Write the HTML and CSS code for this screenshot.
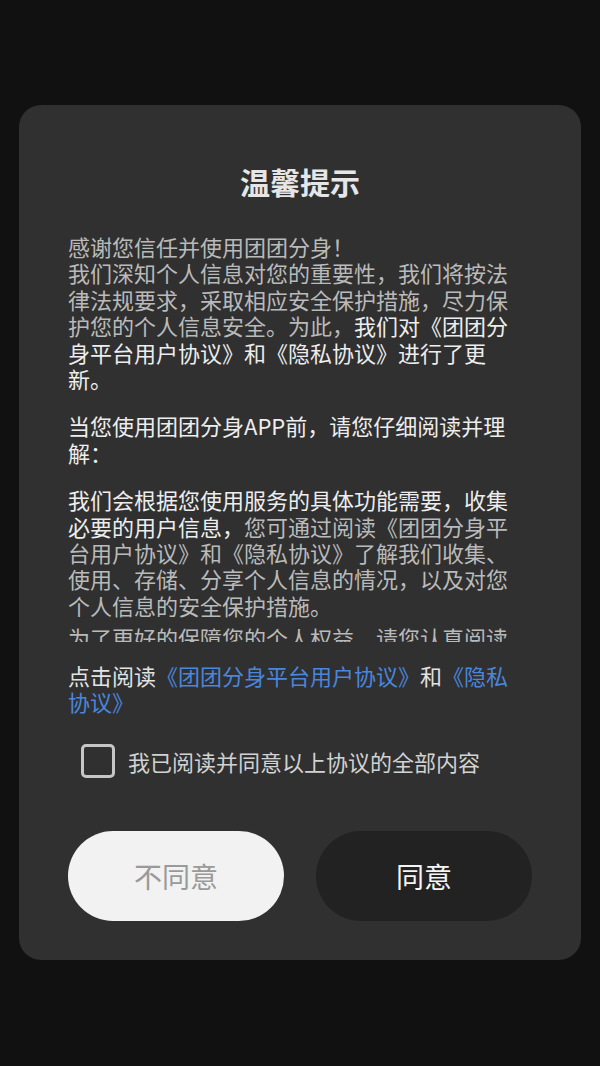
FILE: index.html
```html
<!DOCTYPE html>
<html lang="zh-CN">
<head>
    <meta charset="UTF-8">
    <meta name="viewport" content="width=device-width, initial-scale=1.0">
    <title>温馨提示</title>
    <link rel="stylesheet" href="styles.css">
</head>
<body>
    <div class="page">
        <div class="dialog">
            <h2 class="dialog-title">温馨提示</h2>

            <div class="notice">
                <p>感谢您信任并使用团团分身！<br>我们深知个人信息对您的重要性，我们将按法律法规要求，采取相应安全保护措施，尽力保护您的个人信息安全。为此，<span class="em">我们对《团团分身平台用户协议》和《隐私协议》进行了更新。</span></p>
                <p class="em">当您使用团团分身APP前，请您仔细阅读并理解：</p>
                <p><span class="em">我们会根据您使用服务的具体功能需要，收集必要的用户信息，</span>您可通过阅读《团团分身平台用户协议》和《隐私协议》了解我们收集、使用、存储、分享个人信息的情况，以及对您个人信息的安全保护措施。</p>
                <p class="tight">为了更好的保障您的个人权益，请您认真阅读以上协议的全部内容，如您同意，请点击“同意”开始使用我们的服务。</p>
            </div>

            <p class="links">点击阅读<a href="#">《团团分身平台用户协议》</a>和<a href="#">《隐私协议》</a></p>

            <label class="agree">
                <input type="checkbox" id="agree">
                <span class="box"></span>
                <span>我已阅读并同意以上协议的全部内容</span>
            </label>

            <div class="actions">
                <button type="button" class="btn btn-reject">不同意</button>
                <button type="button" class="btn btn-accept">同意</button>
            </div>
        </div>
    </div>
</body>
</html>
```

FILE: styles.css
```css
body {
    margin: 0;
    background: #111111;
    font-family: "Noto Sans CJK SC", "Noto Sans", sans-serif;
    height: 1066px;
    overflow: hidden;
}

.page {
    padding: 105px 19px 0 19px;
}

.dialog {
    background: #303030;
    border-radius: 22px;
    height: 855px;
    box-sizing: border-box;
    padding: 56px 0 0 49px;
    display: flex;
    flex-direction: column;
}

.dialog-title {
    margin: 0 49px 0 0;
    text-align: center;
    font-size: 30px;
    line-height: 40px;
    font-weight: bold;
    color: #e6e6e6;
}

.notice {
    margin-top: 32px;
    width: 446px;
    height: 409px;
    overflow: hidden;
    font-size: 22px;
    line-height: 1.2;
    color: #bababa;
}

.notice p {
    margin: 21px 0 0 0;
}

.notice p:first-child {
    margin-top: 0;
}

.notice p.tight {
    margin-top: 6px;
}

.em {
    color: #ededed;
}

.links {
    margin: 20px 0 0 0;
    width: 446px;
    font-size: 22px;
    line-height: 1.2;
    color: #e2e2e2;
}

.links a {
    color: #4a86dc;
    text-decoration: none;
}

.agree {
    margin: 29px 0 0 13px;
    display: flex;
    align-items: center;
    gap: 13px;
    font-size: 22px;
    color: #d2d2d2;
    cursor: pointer;
}

.agree input {
    display: none;
}

.agree .box {
    width: 28px;
    height: 28px;
    border: 3px solid #c6c6c6;
    border-radius: 5px;
}

.agree input:checked + .box {
    background: #4a86dc;
    border-color: #4a86dc;
}

.actions {
    margin-top: 53px;
    display: flex;
    gap: 32px;
}

.btn {
    width: 216px;
    height: 90px;
    border: none;
    border-radius: 45px;
    font-family: inherit;
    font-size: 28px;
    cursor: pointer;
}

.btn-reject {
    background: #f2f2f2;
    color: #9a9a9a;
}

.btn-accept {
    background: #222222;
    color: #f5f5f5;
}
```
